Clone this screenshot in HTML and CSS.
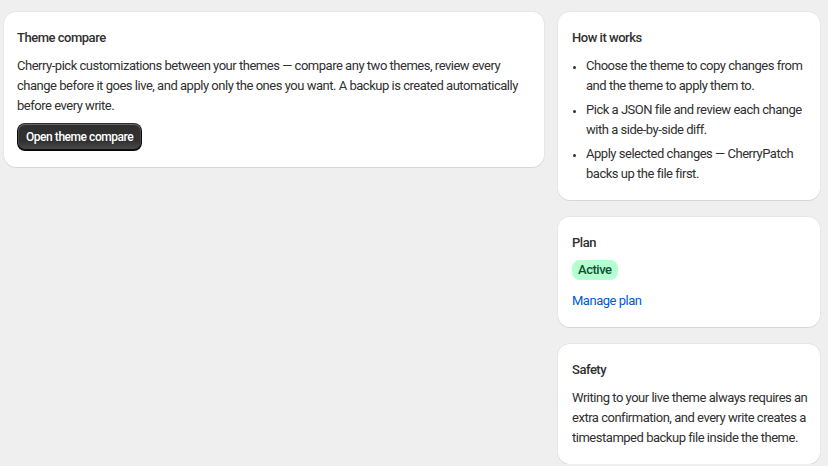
FILE: index.html
```html
<!DOCTYPE html>
<html lang="en">
<head>
<meta charset="utf-8">
<title>CherryPatch</title>
<link rel="stylesheet" href="styles.css">
</head>
<body>
<div class="layout">
  <div class="main">
    <section class="card">
      <h2 class="heading">Theme compare</h2>
      <p class="text">Cherry-pick customizations between your themes — compare any two themes, review every change before it goes live, and apply only the ones you want. A backup is created automatically before every write.</p>
      <div class="actions"><button class="btn-primary" type="button">Open theme compare</button></div>
    </section>
  </div>
  <aside class="side">
    <section class="card">
      <h2 class="heading">How it works</h2>
      <ul class="list">
        <li>Choose the theme to copy changes from and the theme to apply them to.</li>
        <li>Pick a JSON file and review each change with a side-by-side diff.</li>
        <li>Apply selected changes — CherryPatch backs up the file first.</li>
      </ul>
    </section>
    <section class="card">
      <h2 class="heading">Plan</h2>
      <div class="badge-row"><span class="badge">Active</span></div>
      <a class="link" href="#">Manage plan</a>
    </section>
    <section class="card">
      <h2 class="heading">Safety</h2>
      <p class="text">Writing to your live theme always requires an extra confirmation, and every write creates a timestamped backup file inside the theme.</p>
    </section>
  </aside>
</div>
</body>
</html>
```

FILE: styles.css
```css
* { box-sizing: border-box; }
html, body { margin: 0; padding: 0; }
body {
  background: #efefef;
  font-family: Roboto, "Noto Sans", "Liberation Sans", sans-serif;
  font-size: 13px;
  line-height: 20px;
  letter-spacing: -0.48px;
  color: #303030;
  -webkit-font-smoothing: antialiased;
}
.layout {
  display: grid;
  grid-template-columns: 540px 262px;
  column-gap: 14px;
  align-items: start;
  padding: 12px 8px 0 4px;
}
.side {
  display: flex;
  flex-direction: column;
  gap: 17px;
}
.card {
  background: #ffffff;
  border-radius: 12px;
  padding: 16px 12px 16px 14px;
  box-shadow: 0 1px 0 0 rgba(26, 26, 26, 0.07), 0 0 0 1px rgba(0, 0, 0, 0.035);
}
.main .card { padding: 16px 13px; }
.heading {
  margin: 0;
  font-size: 13px;
  line-height: 20px;
  font-weight: 500;
  color: #303030;
}
.text { margin: 8px 0 0; }
.actions { margin-top: 7px; }
.btn-primary {
  font-family: inherit;
  font-size: 12px;
  line-height: 16px;
  letter-spacing: -0.45px;
  font-weight: 500;
  color: #ffffff;
  height: 28px;
  padding: 6px 9px;
  border: none;
  border-radius: 8px;
  background: linear-gradient(180deg, rgba(48, 48, 48, 0) 63.53%, rgba(255, 255, 255, 0.15)), #303030;
  box-shadow: inset 0 -1px 0 1px rgba(0, 0, 0, 0.8), inset 0 0 0 1px #303030, inset 0 0.5px 0 1.5px rgba(255, 255, 255, 0.25);
  cursor: pointer;
}
.list {
  margin: 8px 0 0;
  padding-left: 14px;
}
.list li + li { margin-top: 4px; }
.list li::marker { font-size: 11px; }
.badge-row { margin-top: 7px; }
.badge {
  display: inline-block;
  background: #b4fed2;
  color: #0c5132;
  font-size: 13px;
  line-height: 16px;
  font-weight: 500;
  padding: 2px 6px;
  border-radius: 8px;
}
.link {
  display: block;
  margin-top: 11px;
  color: #005bd3;
  text-decoration: none;
}
```
